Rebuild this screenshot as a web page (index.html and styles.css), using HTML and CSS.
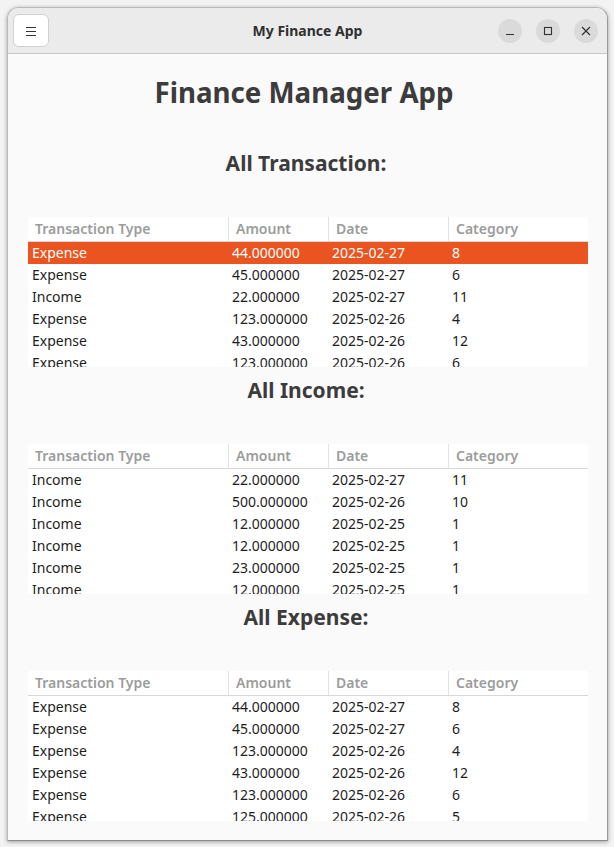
FILE: index.html
```html
<!DOCTYPE html>
<html>
<head>
<meta charset="utf-8">
<link rel="stylesheet" href="styles.css">
</head>
<body>
<div class="window">
  <header class="titlebar">
    <div class="tb-left">
      <button class="menu-btn" aria-label="Menu">
        <svg width="12" height="10" viewBox="0 0 12 10"><path d="M1 1.5h10M1 5.5h10M1 9.5h10" stroke="#333" stroke-width="1" fill="none"/></svg>
      </button>
    </div>
    <div class="tb-title">My Finance App</div>
    <div class="tb-right">
      <span class="ctl"><svg width="12" height="12" viewBox="0 0 12 12"><path d="M2 9.5h8" stroke="#333" stroke-width="1.2"/></svg></span>
      <span class="ctl"><svg width="12" height="12" viewBox="0 0 12 12"><rect x="2.5" y="2.5" width="7" height="7" stroke="#333" stroke-width="1.1" fill="none"/></svg></span>
      <span class="ctl"><svg width="12" height="12" viewBox="0 0 12 12"><path d="M2 2l8 8M10 2l-8 8" stroke="#333" stroke-width="1.2"/></svg></span>
    </div>
  </header>
  <main class="content">
    <h1 class="app-title">Finance Manager App</h1>

    <h2 class="section-title first">All Transaction:</h2>
    <div class="table-wrap">
      <div class="thead">
        <div class="th c1">Transaction Type</div><div class="th c2">Amount</div><div class="th c3">Date</div><div class="th c4">Category</div>
      </div>
      <div class="row selected"><div class="td c1">Expense</div><div class="td c2">44.000000</div><div class="td c3">2025-02-27</div><div class="td c4">8</div></div>
      <div class="row"><div class="td c1">Expense</div><div class="td c2">45.000000</div><div class="td c3">2025-02-27</div><div class="td c4">6</div></div>
      <div class="row"><div class="td c1">Income</div><div class="td c2">22.000000</div><div class="td c3">2025-02-27</div><div class="td c4">11</div></div>
      <div class="row"><div class="td c1">Expense</div><div class="td c2">123.000000</div><div class="td c3">2025-02-26</div><div class="td c4">4</div></div>
      <div class="row"><div class="td c1">Expense</div><div class="td c2">43.000000</div><div class="td c3">2025-02-26</div><div class="td c4">12</div></div>
      <div class="row"><div class="td c1">Expense</div><div class="td c2">123.000000</div><div class="td c3">2025-02-26</div><div class="td c4">6</div></div>
    </div>

    <h2 class="section-title">All Income:</h2>
    <div class="table-wrap">
      <div class="thead">
        <div class="th c1">Transaction Type</div><div class="th c2">Amount</div><div class="th c3">Date</div><div class="th c4">Category</div>
      </div>
      <div class="row"><div class="td c1">Income</div><div class="td c2">22.000000</div><div class="td c3">2025-02-27</div><div class="td c4">11</div></div>
      <div class="row"><div class="td c1">Income</div><div class="td c2">500.000000</div><div class="td c3">2025-02-26</div><div class="td c4">10</div></div>
      <div class="row"><div class="td c1">Income</div><div class="td c2">12.000000</div><div class="td c3">2025-02-25</div><div class="td c4">1</div></div>
      <div class="row"><div class="td c1">Income</div><div class="td c2">12.000000</div><div class="td c3">2025-02-25</div><div class="td c4">1</div></div>
      <div class="row"><div class="td c1">Income</div><div class="td c2">23.000000</div><div class="td c3">2025-02-25</div><div class="td c4">1</div></div>
      <div class="row"><div class="td c1">Income</div><div class="td c2">12.000000</div><div class="td c3">2025-02-25</div><div class="td c4">1</div></div>
    </div>

    <h2 class="section-title">All Expense:</h2>
    <div class="table-wrap">
      <div class="thead">
        <div class="th c1">Transaction Type</div><div class="th c2">Amount</div><div class="th c3">Date</div><div class="th c4">Category</div>
      </div>
      <div class="row"><div class="td c1">Expense</div><div class="td c2">44.000000</div><div class="td c3">2025-02-27</div><div class="td c4">8</div></div>
      <div class="row"><div class="td c1">Expense</div><div class="td c2">45.000000</div><div class="td c3">2025-02-27</div><div class="td c4">6</div></div>
      <div class="row"><div class="td c1">Expense</div><div class="td c2">123.000000</div><div class="td c3">2025-02-26</div><div class="td c4">4</div></div>
      <div class="row"><div class="td c1">Expense</div><div class="td c2">43.000000</div><div class="td c3">2025-02-26</div><div class="td c4">12</div></div>
      <div class="row"><div class="td c1">Expense</div><div class="td c2">123.000000</div><div class="td c3">2025-02-26</div><div class="td c4">6</div></div>
      <div class="row"><div class="td c1">Expense</div><div class="td c2">125.000000</div><div class="td c3">2025-02-26</div><div class="td c4">5</div></div>
    </div>
  </main>
</div>
</body>
</html>
```
FILE: styles.css
```css
* { box-sizing: border-box; }
html, body { margin: 0; padding: 0; }
body {
  background: #f3f3f3;
  width: 614px;
  height: 847px;
  overflow: hidden;
  padding: 7px 6px 0 7px;
  font-family: "Noto Sans", "DejaVu Sans", sans-serif;
}
.window {
  width: 601px;
  height: 834px;
  background: #fafafa;
  border: 1px solid #b9b9b9;
  border-bottom-color: #8c8c8c;
  border-right-color: #9a9a9a;
  border-radius: 12px 12px 0 0;
  box-shadow: 0 1px 4px rgba(0,0,0,0.35);
  overflow: hidden;
  display: flex;
  flex-direction: column;
}
.titlebar {
  height: 46px;
  flex: none;
  background: #ebebeb;
  border-bottom: 1px solid #c9c9c9;
  display: grid;
  grid-template-columns: 1fr auto 1fr;
  align-items: center;
  padding: 0 9px 0 5px;
}
.tb-left { display: flex; align-items: center; }
.menu-btn {
  width: 36px;
  height: 33px;
  margin: 0;
  padding: 0;
  background: #ffffff;
  border: 1px solid #d0d0d0;
  border-radius: 6px;
  display: flex;
  align-items: center;
  justify-content: center;
}
.tb-title {
  font-weight: bold;
  font-size: 14px;
  color: #303030;
  padding-left: 4px;
}
.tb-right {
  display: flex;
  justify-content: flex-end;
  gap: 14px;
}
.ctl {
  width: 24px;
  height: 24px;
  border-radius: 50%;
  background: #dadada;
  display: flex;
  align-items: center;
  justify-content: center;
}
.content {
  flex: 1;
  padding: 21px 19px 0 20px;
  display: flex;
  flex-direction: column;
}
.app-title {
  margin: 0;
  text-align: center;
  font-size: 27.7px;
  line-height: 34px;
  font-weight: bold;
  color: #3c3c3c;
  padding-right: 8px;
}
.section-title {
  margin: 10px 0 41px;
  text-align: center;
  font-size: 21px;
  line-height: 26px;
  font-weight: bold;
  color: #3c3c3c;
  padding-right: 4px;
}
.section-title.first { margin-top: 41px; }
.table-wrap {
  height: 150px;
  overflow: hidden;
  background: #ffffff;
  flex: none;
}
.thead {
  display: grid;
  grid-template-columns: 200px 100px 120px 1fr;
  height: 25px;
  border-bottom: 1px solid #d8d8d8;
}
.th {
  font-size: 14px;
  font-weight: 600;
  color: #9c9c9c;
  line-height: 24px;
  padding-left: 7px;
  border-left: 1px solid #e2e2e2;
  white-space: nowrap;
}
.th.c1 { border-left: none; }
.row {
  display: grid;
  grid-template-columns: 200px 100px 120px 1fr;
  height: 22px;
  line-height: 22px;
  font-size: 14px;
  color: #1e1e1e;
}
.row.selected { background: #e95420; color: #ffffff; }
.td { padding-left: 4px; white-space: nowrap; }
```
